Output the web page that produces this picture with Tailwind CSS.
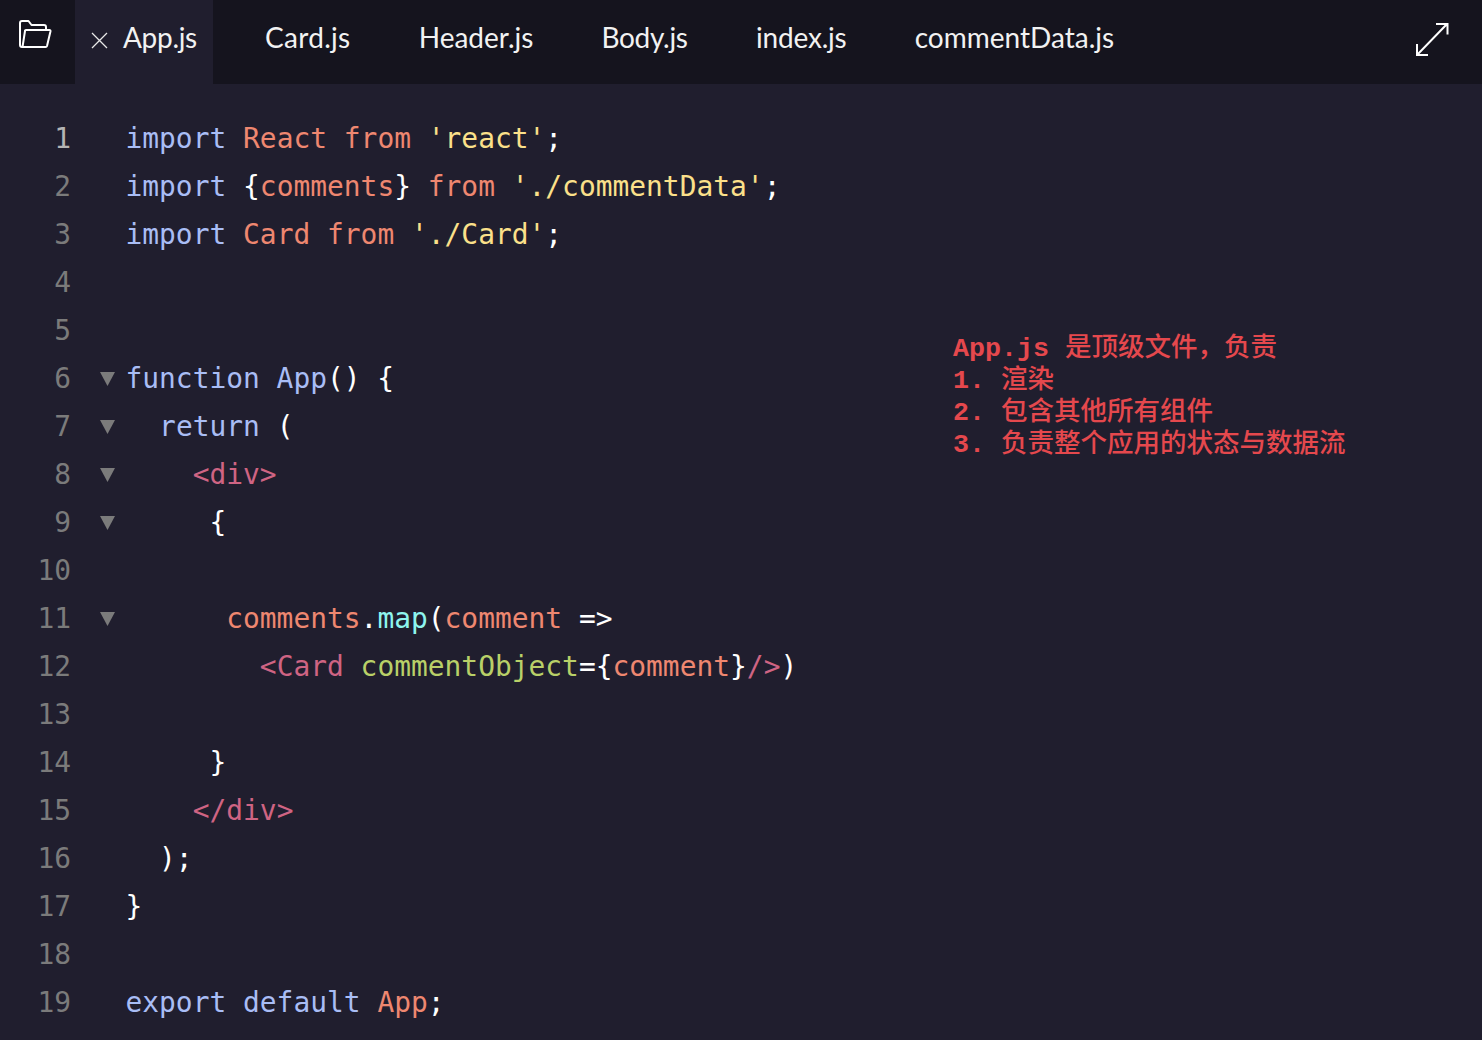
<!DOCTYPE html>
<html lang="zh">
<head>
  <meta charset="UTF-8" />
  <title>App.js</title>
  <script src="https://cdn.jsdelivr.net/npm/@tailwindcss/browser@4"></script>
</head>
<body class="bg-[#201e2e] overflow-hidden">
  <div class="relative w-[1482px] h-[1040px] overflow-hidden">
    <!-- tabs -->
    <header class="flex h-[84px] bg-[#15141e] text-[#f2f2f2] text-[28px] font-['Lato',sans-serif]">
      <div class="w-[75px] flex pl-[19px] pt-[20px]">
        <svg width="33" height="29" viewBox="0 0 33 29" fill="none" stroke="#ffffff" stroke-width="2" stroke-linejoin="round">
          <path d="M7 27H3a2 2 0 0 1-2-2V3a2 2 0 0 1 2-2h6.500l3 4H25a2 2 0 0 1 2 2v3" />
          <path d="M7 10h23.500a1 1 0 0 1 1 1.200L28 26a1.500 1.500 0 0 1-1.500 1H3.500L6 11a1 1 0 0 1 1-1z" />
        </svg>
      </div>
      <div class="w-[138px] bg-[#201e2e] flex items-start pl-[16px] pt-[16px]">
        <svg class="mt-[16px] mr-[15px]" width="17" height="17" viewBox="0 0 17 17" stroke="#e8e8e8" stroke-width="1.300"><path d="M1 1l15 15M16 1L1 16" /></svg>
        <span class="tracking-[-0.3px]">App.js</span>
      </div>
      <nav class="flex items-start pt-[16px] pl-[52px] gap-[68.700px]">
        <span class="w-[85px] tracking-[0.3px]">Card.js</span>
        <span class="w-[114px]">Header.js</span>
        <span class="w-[86px] tracking-[-0.3px]">Body.js</span>
        <span class="w-[90px] tracking-[-0.2px]">index.js</span>
        <span>commentData.js</span>
      </nav>
      <div class="ml-auto pr-[33px] pt-[22px]">
        <svg width="34" height="34" viewBox="0 0 34 34" fill="none" stroke="#ffffff" stroke-width="2"><path d="M2 33L32 2M21 2h11.500v10.500M2 22v11h11" /></svg>
      </div>
    </header>

    <!-- code -->
    <main class="pt-[31px] text-[27.900px] leading-[48px] font-['DejaVu_Sans_Mono',monospace] text-white">
      <div class="flex h-12"><span class="w-[71px] text-right text-[#b4b4b4]">1</span><span class="w-[54.500px]"></span><span class="whitespace-pre"><span class="text-[#a9bdf5]">import</span> <span class="text-[#ee8770]">React</span> <span class="text-[#ee8770]">from</span> <span class="text-[#fbe08a]">'react'</span>;</span></div>
      <div class="flex h-12"><span class="w-[71px] text-right text-[#7b7b7b]">2</span><span class="w-[54.500px]"></span><span class="whitespace-pre"><span class="text-[#a9bdf5]">import</span> {<span class="text-[#ee8770]">comments</span>} <span class="text-[#ee8770]">from</span> <span class="text-[#fbe08a]">'./commentData'</span>;</span></div>
      <div class="flex h-12"><span class="w-[71px] text-right text-[#7b7b7b]">3</span><span class="w-[54.500px]"></span><span class="whitespace-pre"><span class="text-[#a9bdf5]">import</span> <span class="text-[#ee8770]">Card</span> <span class="text-[#ee8770]">from</span> <span class="text-[#fbe08a]">'./Card'</span>;</span></div>
      <div class="flex h-12"><span class="w-[71px] text-right text-[#7b7b7b]">4</span></div>
      <div class="flex h-12"><span class="w-[71px] text-right text-[#7b7b7b]">5</span></div>
      <div class="flex h-12"><span class="w-[71px] text-right text-[#7b7b7b]">6</span><span class="w-[54.500px] pl-[29px] pt-[17px]"><span class="block w-[15px] h-[14px] bg-[#7b7b7b] [clip-path:polygon(0_0,100%_0,50%_100%)]"></span></span><span class="whitespace-pre"><span class="text-[#a9bdf5]">function App</span>() {</span></div>
      <div class="flex h-12"><span class="w-[71px] text-right text-[#7b7b7b]">7</span><span class="w-[54.500px] pl-[29px] pt-[17px]"><span class="block w-[15px] h-[14px] bg-[#7b7b7b] [clip-path:polygon(0_0,100%_0,50%_100%)]"></span></span><span class="whitespace-pre">  <span class="text-[#a9bdf5]">return</span> (</span></div>
      <div class="flex h-12"><span class="w-[71px] text-right text-[#7b7b7b]">8</span><span class="w-[54.500px] pl-[29px] pt-[17px]"><span class="block w-[15px] h-[14px] bg-[#7b7b7b] [clip-path:polygon(0_0,100%_0,50%_100%)]"></span></span><span class="whitespace-pre">    <span class="text-[#cf6483]">&lt;div&gt;</span></span></div>
      <div class="flex h-12"><span class="w-[71px] text-right text-[#7b7b7b]">9</span><span class="w-[54.500px] pl-[29px] pt-[17px]"><span class="block w-[15px] h-[14px] bg-[#7b7b7b] [clip-path:polygon(0_0,100%_0,50%_100%)]"></span></span><span class="whitespace-pre">     {</span></div>
      <div class="flex h-12"><span class="w-[71px] text-right text-[#7b7b7b]">10</span></div>
      <div class="flex h-12"><span class="w-[71px] text-right text-[#7b7b7b]">11</span><span class="w-[54.500px] pl-[29px] pt-[17px]"><span class="block w-[15px] h-[14px] bg-[#7b7b7b] [clip-path:polygon(0_0,100%_0,50%_100%)]"></span></span><span class="whitespace-pre">      <span class="text-[#ee8770]">comments</span>.<span class="text-[#8ef5ee]">map</span>(<span class="text-[#ee8770]">comment</span> =&gt;</span></div>
      <div class="flex h-12"><span class="w-[71px] text-right text-[#7b7b7b]">12</span><span class="w-[54.500px]"></span><span class="whitespace-pre">        <span class="text-[#cf6483]">&lt;Card</span> <span class="text-[#b9d068]">commentObject</span>={<span class="text-[#ee8770]">comment</span>}<span class="text-[#cf6483]">/&gt;</span>)</span></div>
      <div class="flex h-12"><span class="w-[71px] text-right text-[#7b7b7b]">13</span></div>
      <div class="flex h-12"><span class="w-[71px] text-right text-[#7b7b7b]">14</span><span class="w-[54.500px]"></span><span class="whitespace-pre">     }</span></div>
      <div class="flex h-12"><span class="w-[71px] text-right text-[#7b7b7b]">15</span><span class="w-[54.500px]"></span><span class="whitespace-pre">    <span class="text-[#cf6483]">&lt;/div&gt;</span></span></div>
      <div class="flex h-12"><span class="w-[71px] text-right text-[#7b7b7b]">16</span><span class="w-[54.500px]"></span><span class="whitespace-pre">  );</span></div>
      <div class="flex h-12"><span class="w-[71px] text-right text-[#7b7b7b]">17</span><span class="w-[54.500px]"></span><span class="whitespace-pre">}</span></div>
      <div class="flex h-12"><span class="w-[71px] text-right text-[#7b7b7b]">18</span></div>
      <div class="flex h-12"><span class="w-[71px] text-right text-[#7b7b7b]">19</span><span class="w-[54.500px]"></span><span class="whitespace-pre"><span class="text-[#a9bdf5]">export default</span> <span class="text-[#ee8770]">App</span>;</span></div>
    </main>

    <!-- annotation over the editor -->
    <div class="absolute left-[953px] top-[333px] text-[26.500px] leading-[32px] text-[#e5484d] font-medium font-['Liberation_Mono','Noto_Sans_CJK_SC',monospace]">
      <p class="whitespace-pre"><b class="text-[26.670px]">App.js</b> 是顶级文件，负责</p>
      <p class="whitespace-pre"><b class="text-[26.670px]">1.</b> 渲染</p>
      <p class="whitespace-pre"><b class="text-[26.670px]">2.</b> 包含其他所有组件</p>
      <p class="whitespace-pre"><b class="text-[26.670px]">3.</b> 负责整个应用的状态与数据流</p>
    </div>
  </div>
</body>
</html>
